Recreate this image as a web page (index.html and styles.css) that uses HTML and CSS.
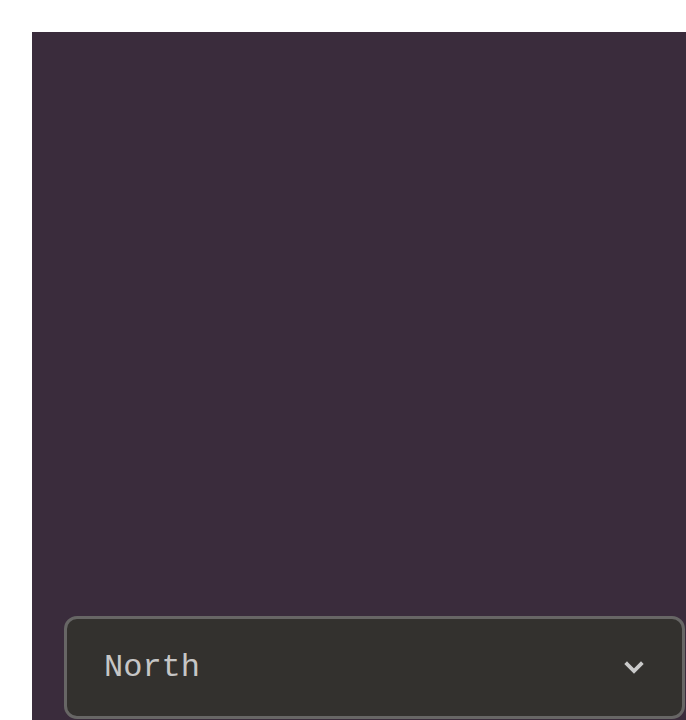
FILE: index.html
```html
<!DOCTYPE html>
<html>
<head>
<meta charset="utf-8">
<link rel="stylesheet" href="styles.css">
</head>
<body>
<div class="page">
  <div class="panel">
    <div class="select">
      <span class="select-value">North</span>
      <svg class="chevron" width="20" height="13" viewBox="0 0 20 13"><path d="M3 3 L10 10 L17 3" fill="none" stroke="#cacaca" stroke-width="3.8" stroke-linecap="square" stroke-linejoin="miter"/></svg>
    </div>
  </div>
</div>
</body>
</html>
```
FILE: styles.css
```css
html, body {
  margin: 0;
  padding: 0;
  background: #ffffff;
  overflow: hidden;
}
.page {
  padding: 32px 0 0 32px;
}
.panel {
  background: #3a2c3c;
  width: 685px;
  box-sizing: border-box;
  padding: 584px 32px 32px 32px;
}
.select {
  box-sizing: border-box;
  width: 621px;
  height: 103px;
  border: 3px solid #676665;
  border-radius: 13px;
  background: #33312e;
  display: flex;
  align-items: center;
  justify-content: space-between;
  padding: 0 38px 0 37px;
}
.select-value {
  font-family: "Liberation Mono", monospace;
  font-size: 32px;
  color: #c6c6c6;
  line-height: 1;
  margin-top: 0;
}
.chevron {
  display: block;
}
```
